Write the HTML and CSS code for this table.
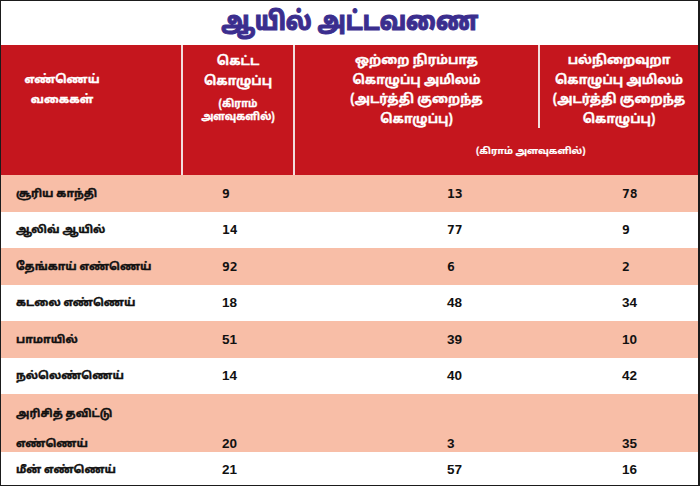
FILE: index.html
```html
<!DOCTYPE html>
<html lang="ta">
<head>
<meta charset="utf-8">
<title>ஆயில் அட்டவணை</title>
<link rel="stylesheet" href="styles.css">
</head>
<body>
<div class="frame">
  <div class="title-wrap"><h1 class="title">ஆயில் அட்டவணை</h1></div>
  <div class="head">
    <div class="hcell hc1"><div class="hc1-text">எண்ணெய்<br>வகைகள்</div></div>
    <div class="hcell hc2">
      <div class="hmain">கெட்ட<br>கொழுப்பு</div>
      <div class="hsmall">(கிராம்<br>அளவுகளில்)</div>
    </div>
    <div class="hgroup">
      <div class="hpair">
        <div class="hcell hc3">ஒற்றை நிரம்பாத<br>கொழுப்பு அமிலம்<br>(அடர்த்தி குறைந்த<br>கொழுப்பு)</div>
        <div class="hcell hc4">பல்நிறைவுறா<br>கொழுப்பு அமிலம்<br>(அடர்த்தி குறைந்த<br>கொழுப்பு)</div>
      </div>
      <div class="hunit">(கிராம் அளவுகளில்)</div>
    </div>
  </div>
  <div class="body">
    <div class="row pink r37 mono"><div class="lab">சூரிய காந்தி</div><div class="n2">9</div><div class="n3">13</div><div class="n4">78</div></div>
    <div class="row r36 mono"><div class="lab">ஆலிவ் ஆயில்</div><div class="n2">14</div><div class="n3">77</div><div class="n4">9</div></div>
    <div class="row pink r37 mono"><div class="lab">தேங்காய் எண்ணெய்</div><div class="n2">92</div><div class="n3">6</div><div class="n4">2</div></div>
    <div class="row r36"><div class="lab">கடலை எண்ணெய்</div><div class="n2">18</div><div class="n3">48</div><div class="n4">34</div></div>
    <div class="row pink r37"><div class="lab">பாமாயில்</div><div class="n2">51</div><div class="n3">39</div><div class="n4">10</div></div>
    <div class="row r36"><div class="lab">நல்லெண்ணெய்</div><div class="n2">14</div><div class="n3">40</div><div class="n4">42</div></div>
    <div class="row pink tall"><div class="lab two"><span>அரிசித் தவிட்டு</span><span>எண்ணெய்</span></div><div class="n2">20</div><div class="n3">3</div><div class="n4">35</div></div>
    <div class="row last"><div class="lab">மீன் எண்ணெய்</div><div class="n2">21</div><div class="n3">57</div><div class="n4">16</div></div>
  </div>
</div>
</body>
</html>
```
FILE: styles.css
```css
* { box-sizing: border-box; }
html, body { margin: 0; padding: 0; background: #fff; }
body {
  font-family: "Noto Sans Tamil", "Lohit Tamil", "Latha", "Noto Sans", "DejaVu Sans", sans-serif;
  font-weight: 700;
}
.frame {
  width: 700px;
  height: 486px;
  border: 1px solid #1b1b1b;
  border-right-width: 2px;
  overflow: hidden;
  display: flex;
  flex-direction: column;
  background: #fff;
}
.title-wrap {
  height: 44px;
  display: flex;
  justify-content: center;
  align-items: center;
  flex: none;
}
.title {
  margin: 0;
  display: inline-block;
  font-size: 26px;
  line-height: 30px;
  font-weight: 800;
  color: #3b2e8e;
  -webkit-text-stroke: 1px #3b2e8e;
  transform: scaleX(0.87);
  margin-top: 2px;
}
.head {
  height: 130px;
  background: #c5161e;
  color: #fff;
  display: grid;
  grid-template-columns: 180px 112px 1fr;
  flex: none;
}
.hcell {
  font-size: 12.5px;
  -webkit-text-stroke: 0.35px #fff;
}
.hc1 { padding-top: 25px; }
.hc1-text { width: 122px; text-align: center; line-height: 20px; font-size: 11.5px; }
.hc2 {
  border-left: 2px solid #f3dede;
  text-align: center;
  padding-top: 7px;
}
.hmain { line-height: 20px; font-size: 12.5px; }
.hsmall { margin-top: 6px; line-height: 13px; font-size: 10px; }
.hgroup {
  border-left: 2px solid #f3dede;
  display: flex;
  flex-direction: column;
}
.hpair {
  height: 83px;
  display: grid;
  grid-template-columns: 243px 1fr;
}
.hc3, .hc4 {
  text-align: center;
  padding-top: 7px;
  line-height: 19.5px;
  white-space: nowrap;
}
.hc4 { border-left: 2px solid #f3dede; height: 83px; }
.hunit {
  padding-left: 181px;
  padding-top: 17px;
  font-size: 9.5px;
  line-height: 14px;
  -webkit-text-stroke: 0.2px #fff;
}
.body { display: flex; flex-direction: column; flex: 1; }
.row {
  display: grid;
  grid-template-columns: 180px 112px 245px 1fr;
  align-items: center;
  font-size: 11px;
  line-height: 16px;
  color: #111;
}
.lab { padding-left: 15px; -webkit-text-stroke: 0.4px #111; }
.pink { background: #f8bea7; }
.r37 { height: 37px; }
.r36 { height: 36px; }
.tall { height: 58px; align-items: end; }
.last { flex: 1; align-items: start; padding-top: 10px; }
.lab.two { display: flex; flex-direction: column; gap: 14px; }
.n2, .n3, .n4 {
  font-family: "Liberation Sans", Arial, sans-serif;
  font-weight: 700;
  font-size: 13.5px;
}
.mono .n2, .mono .n3, .mono .n4 {
  font-family: "DejaVu Sans Mono", "Liberation Mono", monospace;
  font-size: 13px;
}
.n2 { padding-left: 41px; }
.n3 { padding-left: 154px; }
.n4 { padding-left: 84px; }
```
